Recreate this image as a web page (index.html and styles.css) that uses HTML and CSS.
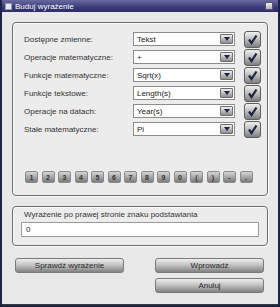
FILE: index.html
```html
<!DOCTYPE html>
<html lang="pl">
<head>
<meta charset="utf-8">
<title>Buduj wyrażenie</title>
<link rel="stylesheet" href="styles.css">
</head>
<body>
<div class="window">
  <div class="titlebar">
    <span class="ticon"></span>
    <span class="ttext">Buduj wyrażenie</span>
    <span class="tclose"></span>
  </div>
  <div class="content">
    <div class="group group-main">
      <div class="row"><span class="label">Dostępne zmienne:</span><div class="combo"><span class="cval">Tekst</span><span class="carrow"></span></div><span class="check"><svg viewBox="0 0 17 17" width="17" height="17"><path d="M5 8.5 L7.5 12 L12.5 4.5" fill="none" stroke="#1c2440" stroke-width="2.2"/></svg></span></div>
      <div class="row"><span class="label">Operacje matematyczne:</span><div class="combo"><span class="cval">+</span><span class="carrow"></span></div><span class="check"><svg viewBox="0 0 17 17" width="17" height="17"><path d="M5 8.5 L7.5 12 L12.5 4.5" fill="none" stroke="#1c2440" stroke-width="2.2"/></svg></span></div>
      <div class="row"><span class="label">Funkcje matematyczne:</span><div class="combo"><span class="cval">Sqrt(x)</span><span class="carrow"></span></div><span class="check"><svg viewBox="0 0 17 17" width="17" height="17"><path d="M5 8.5 L7.5 12 L12.5 4.5" fill="none" stroke="#1c2440" stroke-width="2.2"/></svg></span></div>
      <div class="row"><span class="label">Funkcje tekstowe:</span><div class="combo"><span class="cval">Length(s)</span><span class="carrow"></span></div><span class="check"><svg viewBox="0 0 17 17" width="17" height="17"><path d="M5 8.5 L7.5 12 L12.5 4.5" fill="none" stroke="#1c2440" stroke-width="2.2"/></svg></span></div>
      <div class="row"><span class="label">Operacje na datach:</span><div class="combo"><span class="cval">Year(s)</span><span class="carrow"></span></div><span class="check"><svg viewBox="0 0 17 17" width="17" height="17"><path d="M5 8.5 L7.5 12 L12.5 4.5" fill="none" stroke="#1c2440" stroke-width="2.2"/></svg></span></div>
      <div class="row"><span class="label">Stałe matematyczne:</span><div class="combo"><span class="cval">Pi</span><span class="carrow"></span></div><span class="check"><svg viewBox="0 0 17 17" width="17" height="17"><path d="M5 8.5 L7.5 12 L12.5 4.5" fill="none" stroke="#1c2440" stroke-width="2.2"/></svg></span></div>
      <div class="keys">
        <span class="key">1</span><span class="key">2</span><span class="key">3</span><span class="key">4</span><span class="key">5</span><span class="key">6</span><span class="key">7</span><span class="key">8</span><span class="key">9</span><span class="key">0</span><span class="key">(</span><span class="key">)</span><span class="key">-</span><span class="key">.</span>
      </div>
    </div>
    <div class="group group-expr">
      <div class="gtitle">Wyrażenie po prawej stronie znaku podstawiania</div>
      <div class="input">0</div>
    </div>
    <div class="buttons">
      <div class="btncol"><span class="btn">Sprawdź wyrażenie</span></div>
      <div class="btncol"><span class="btn">Wprowadź</span><span class="btn">Anuluj</span></div>
    </div>
  </div>
</div>
</body>
</html>
```
FILE: styles.css
```css
html, body {
  margin: 0;
  padding: 0;
}
body {
  width: 280px;
  height: 307px;
  overflow: hidden;
  background: #1c2248;
  font-family: "Liberation Sans", Arial, sans-serif;
  font-size: 8px;
  color: #2a2a2a;
}
.window {
  margin-left: 2px;
  width: 276px;
  height: 304px;
  background: #e8e8e8;
  border-bottom: 1px solid #3a3a3a;
  display: flex;
  flex-direction: column;
}
.titlebar {
  height: 12px;
  background: linear-gradient(#6a6aa2, #3a3a78 60%, #2f2e6c);
  display: flex;
  align-items: center;
  padding: 0 3px;
  color: #fff;
  gap: 3px;
}
.ticon {
  width: 7px;
  height: 7px;
  background: #e8e8f0;
  border: 1px solid #99a;
  box-sizing: border-box;
}
.ttext {
  flex: 1;
  font-size: 8px;
}
.tclose {
  width: 8px;
  height: 8px;
  background: linear-gradient(#f0f0f0, #b0b0b8);
  border: 1px solid #556;
  box-sizing: border-box;
  margin-right: 2px;
}
.content {
  padding: 10px 10px 0 10px;
  display: flex;
  flex-direction: column;
}
.group {
  border: 1px solid #6e6e6e;
  border-radius: 4px;
  box-shadow: inset 1px 1px 0 #fafafa, 1px 1px 0 #fafafa;
  background: #ececec;
}
.group-main {
  height: 174px;
  box-sizing: border-box;
  padding: 7px 6px 0 11px;
  display: flex;
  flex-direction: column;
}
.row {
  height: 18px;
  display: flex;
  align-items: center;
}
.label {
  width: 110px;
  color: #333;
}
.combo {
  width: 103px;
  height: 14px;
  box-sizing: border-box;
  background: #fff;
  border: 1px solid #8c8c8c;
  display: flex;
  align-items: center;
  padding-left: 3px;
  padding-right: 1px;
}
.cval {
  flex: 1;
  color: #222;
}
.carrow {
  width: 13px;
  height: 10px;
  background: linear-gradient(#eeeeee, #8e8e8e);
  border: 1px solid #6e6e6e;
  box-sizing: border-box;
  border-radius: 1px;
  position: relative;
}
.carrow::after {
  content: "";
  position: absolute;
  left: 3px;
  top: 2px;
  border-left: 3px solid transparent;
  border-right: 3px solid transparent;
  border-top: 4px solid #1e2444;
}
.check {
  margin-left: 9px;
  width: 17px;
  height: 17px;
  box-sizing: border-box;
  border: 1px solid #5e5e5e;
  border-radius: 3px;
  background: linear-gradient(#f0f0f0, #bcbcbc 50%, #7e7e7e);
  display: flex;
}
.check svg {
  margin: -1px;
}
.keys {
  margin-top: 33px;
  display: flex;
  gap: 3.5px;
  padding-left: 1px;
}
.key {
  width: 13px;
  height: 12px;
  box-sizing: border-box;
  border: 1px solid #8a8a8a;
  border-radius: 2px;
  background: linear-gradient(#d6d6d6, #a8a8a8 50%, #7c7c7c);
  font-size: 7px;
  font-weight: bold;
  color: #333;
  display: flex;
  align-items: center;
  justify-content: center;
}
.group-expr {
  margin-top: 10px;
  height: 40px;
  box-sizing: border-box;
  padding: 3px 8px 0 8px;
}
.gtitle {
  padding-left: 3px;
  height: 12px;
  line-height: 10px;
  color: #333;
}
.input {
  height: 15px;
  box-sizing: border-box;
  background: #fff;
  border: 1px solid #9a9a9a;
  padding-left: 4px;
  line-height: 13px;
}
.buttons {
  margin-top: 12px;
  display: flex;
  justify-content: space-between;
  padding: 0 4px 0 3px;
}
.btncol {
  display: flex;
  flex-direction: column;
  gap: 5px;
}
.btn {
  width: 109px;
  height: 15px;
  box-sizing: border-box;
  border: 1px solid #7a7a7a;
  border-radius: 3px;
  background: linear-gradient(#eeeeee, #bebebe 50%, #828282);
  display: flex;
  align-items: center;
  justify-content: center;
  color: #2a2a2a;
}
```
